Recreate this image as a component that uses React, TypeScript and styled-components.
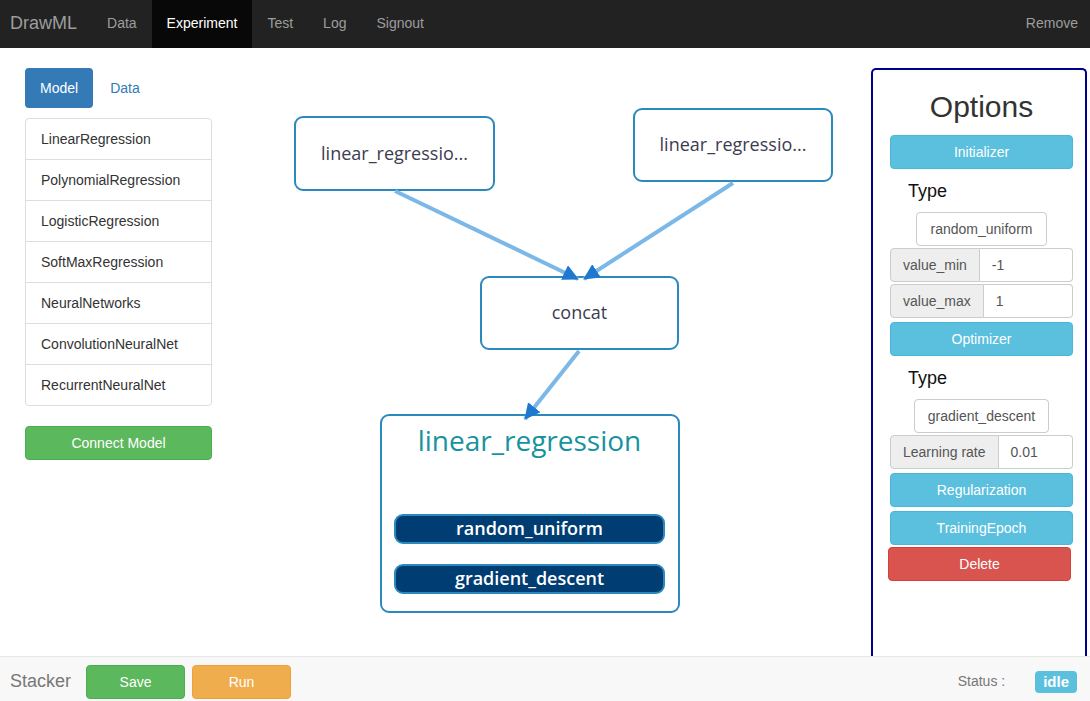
import styled, { createGlobalStyle, css } from "styled-components";

const GlobalStyle = createGlobalStyle`
  html, body {
    margin: 0;
    padding: 0;
    height: 100%;
  }
  body {
    font-family: "Liberation Sans", Arial, sans-serif;
    font-size: 14px;
    line-height: 1.42857;
    color: #333;
    background: #fff;
  }
  * {
    box-sizing: border-box;
  }
`;

const navLinks = ["Data", "Experiment", "Test", "Log", "Signout"];

const models = [
  "LinearRegression",
  "PolynomialRegression",
  "LogisticRegression",
  "SoftMaxRegression",
  "NeuralNetworks",
  "ConvolutionNeuralNet",
  "RecurrentNeuralNet",
];

const Page = styled.div`
  display: flex;
  flex-direction: column;
  height: 100vh;
  overflow: hidden;
`;

const Navbar = styled.nav`
  display: flex;
  align-items: stretch;
  height: 48px;
  flex-shrink: 0;
  background: #222;
`;

const Brand = styled.div`
  padding: 0 15px 0 10px;
  display: flex;
  align-items: center;
  font-size: 18px;
  color: #9d9d9d;
`;

const NavLink = styled.a<{ $active?: boolean; $right?: boolean }>`
  display: flex;
  align-items: center;
  padding: 0 15px;
  color: #9d9d9d;
  text-decoration: none;
  ${({ $active }) =>
    $active &&
    css`
      background: #080808;
      color: #fff;
    `}
  ${({ $right }) =>
    $right &&
    css`
      margin-left: auto;
      padding-right: 12px;
    `}
`;

const Main = styled.div`
  flex: 1;
  display: flex;
  min-height: 0;
`;

const LeftColumn = styled.div`
  width: 212px;
  flex-shrink: 0;
  padding: 20px 0 0 25px;
`;

const Pills = styled.div`
  display: flex;
  gap: 2px;
`;

const Pill = styled.a<{ $active?: boolean }>`
  display: block;
  padding: 10px 15px;
  line-height: 20px;
  border-radius: 4px;
  text-decoration: none;
  color: ${({ $active }) => ($active ? "#fff" : "#337ab7")};
  background: ${({ $active }) => ($active ? "#337ab7" : "transparent")};
`;

const ListGroup = styled.div`
  margin-top: 10px;
  display: flex;
  flex-direction: column;
`;

const ListItem = styled.div`
  padding: 10px 15px;
  line-height: 20px;
  background: #fff;
  border: 1px solid #ddd;
  margin-bottom: -1px;
  color: #333;
  &:first-child {
    border-radius: 4px 4px 0 0;
  }
  &:last-child {
    margin-bottom: 0;
    border-radius: 0 0 4px 4px;
  }
`;

const Button = styled.button<{ $kind: "success" | "warning" | "info" | "danger" | "primary" }>`
  display: block;
  height: 34px;
  padding: 6px 12px;
  font-family: inherit;
  font-size: 14px;
  line-height: 20px;
  border-radius: 4px;
  border: 1px solid transparent;
  color: #fff;
  text-align: center;
  cursor: pointer;
  ${({ $kind }) =>
    ({
      success: css`
        background: #5cb85c;
        border-color: #4cae4c;
      `,
      warning: css`
        background: #f0ad4e;
        border-color: #eea236;
      `,
      info: css`
        background: #5bc0de;
        border-color: #46b8da;
      `,
      danger: css`
        background: #d9534f;
        border-color: #d43f3a;
      `,
      primary: css`
        background: #337ab7;
        border-color: #2e6da4;
      `,
    })[$kind]}
`;

const WideButton = styled(Button)<{ $gap?: number; $shift?: number }>`
  width: 100%;
  margin-top: ${({ $gap }) => $gap ?? 0}px;
  margin-left: ${({ $shift }) => $shift ?? 0}px;
`;

/* ---------- canvas ---------- */

const Canvas = styled.div`
  flex: 1;
  position: relative;
`;

const Edges = styled.svg`
  position: absolute;
  left: 0;
  top: 0;
  width: 100%;
  height: 100%;
  pointer-events: none;
  z-index: 2;
`;

const Node = styled.div<{ $x: number; $y: number; $w: number; $h: number }>`
  position: absolute;
  left: ${({ $x }) => $x}px;
  top: ${({ $y }) => $y}px;
  width: ${({ $w }) => $w}px;
  height: ${({ $h }) => $h}px;
  border: 2px solid #2a8abd;
  border-radius: 9px;
  background: #fff;
  font-family: "Open Sans", "Noto Sans", sans-serif;
  z-index: 1;
`;

const SimpleNode = styled(Node)`
  display: flex;
  align-items: center;
  justify-content: center;
  font-size: 18px;
  color: #3c3c50;
`;

const GroupNode = styled(Node)`
  display: flex;
  flex-direction: column;
  padding: 6px 13px 0 12px;
`;

const GroupTitle = styled.div`
  text-align: center;
  font-size: 28px;
  line-height: 36px;
  color: #17939f;
`;

const Chip = styled.div<{ $first?: boolean }>`
  height: 30px;
  margin-top: ${({ $first }) => ($first ? 56 : 20)}px;
  border: 2px solid #2a8abd;
  border-radius: 9px;
  background: #003d73;
  color: #fff;
  font-size: 18px;
  font-weight: 600;
  display: flex;
  align-items: center;
  justify-content: center;
`;

/* ---------- options panel ---------- */

const OptionsPanel = styled.aside`
  width: 216px;
  flex-shrink: 0;
  margin: 20px 3px 0 0;
  border: 2px solid #00008b;
  border-bottom: none;
  border-radius: 5px 5px 0 0;
  padding: 0 12px 0 17px;
  display: flex;
  flex-direction: column;
`;

const OptionsTitle = styled.h2`
  margin: 20px 0 12px;
  font-size: 30px;
  font-weight: 400;
  line-height: 33px;
  text-align: center;
  color: #333;
`;

const TypeLabel = styled.div`
  margin: 12px 0 11px 18px;
  font-size: 18px;
  line-height: 20px;
  color: #111;
`;

const TypeInput = styled.div<{ $w: number }>`
  align-self: center;
  width: ${({ $w }) => $w}px;
  height: 34px;
  padding: 6px 0;
  line-height: 20px;
  text-align: center;
  color: #555;
  border: 1px solid #ccc;
  border-radius: 4px;
  background: #fff;
`;

const InputGroup = styled.div`
  display: flex;
  height: 34px;
  margin-top: 2px;
`;

const Addon = styled.span`
  padding: 6px 12px;
  line-height: 20px;
  color: #555;
  background: #eee;
  border: 1px solid #ccc;
  border-radius: 4px 0 0 4px;
  white-space: nowrap;
`;

const AddonValue = styled.span`
  flex: 1;
  padding: 6px 12px;
  line-height: 20px;
  color: #555;
  border: 1px solid #ccc;
  border-left: none;
  border-radius: 0 4px 4px 0;
  background: #fff;
`;

/* ---------- footer ---------- */

const Footer = styled.footer`
  height: 45px;
  flex-shrink: 0;
  display: flex;
  align-items: center;
  padding-top: 5px;
  background: #f8f8f8;
  border-top: 1px solid #e7e7e7;
  position: relative;
  z-index: 3;
`;

const FooterBrand = styled.span`
  padding: 0 15px 0 10px;
  font-size: 18px;
  color: #777;
`;

const FooterButton = styled(Button)`
  width: 99px;
  margin-right: 7px;
`;

const Status = styled.span`
  margin-left: auto;
  color: #777;
`;

const StatusLabel = styled.span`
  margin: 0 13px 0 30px;
  padding: 1px 8px;
  height: 22px;
  line-height: 20px;
  font-size: 15px;
  font-weight: 700;
  color: #fff;
  background: #5bc0de;
  border-radius: 4px;
`;

export default function App() {
  return (
    <Page>
      <GlobalStyle />
      <Navbar>
        <Brand>DrawML</Brand>
        {navLinks.map((l) => (
          <NavLink key={l} $active={l === "Experiment"}>
            {l}
          </NavLink>
        ))}
        <NavLink $right>Remove</NavLink>
      </Navbar>

      <Main>
        <LeftColumn>
          <Pills>
            <Pill $active>Model</Pill>
            <Pill>Data</Pill>
          </Pills>
          <ListGroup>
            {models.map((m) => (
              <ListItem key={m}>{m}</ListItem>
            ))}
          </ListGroup>
          <WideButton $kind="success" $gap={20}>
            Connect Model
          </WideButton>
        </LeftColumn>

        <Canvas>
          <Edges>
            <defs>
              <marker
                id="arrow"
                markerUnits="userSpaceOnUse"
                markerWidth="16"
                markerHeight="16"
                viewBox="0 0 16 16"
                refX="15"
                refY="8"
                orient="auto"
              >
                <path d="M0 0 L16 8 L0 16 Z" fill="#1f78cf" />
              </marker>
            </defs>
            <g stroke="#7bb8e8" strokeWidth="4" strokeLinecap="butt">
              <line x1="183" y1="143" x2="366" y2="231" markerEnd="url(#arrow)" />
              <line x1="521" y1="135" x2="372" y2="231" markerEnd="url(#arrow)" />
              <line x1="367" y1="303" x2="313" y2="371" markerEnd="url(#arrow)" />
            </g>
          </Edges>

          <SimpleNode $x={82} $y={68} $w={201} $h={75}>
            linear_regressio...
          </SimpleNode>
          <SimpleNode $x={421} $y={60} $w={200} $h={74}>
            linear_regressio...
          </SimpleNode>
          <SimpleNode $x={268} $y={228} $w={199} $h={74}>
            concat
          </SimpleNode>
          <GroupNode $x={168} $y={366} $w={300} $h={199}>
            <GroupTitle>linear_regression</GroupTitle>
            <Chip $first>random_uniform</Chip>
            <Chip>gradient_descent</Chip>
          </GroupNode>
        </Canvas>

        <OptionsPanel>
          <OptionsTitle>Options</OptionsTitle>
          <WideButton $kind="info">Initializer</WideButton>
          <TypeLabel>Type</TypeLabel>
          <TypeInput $w={131}>random_uniform</TypeInput>
          <InputGroup>
            <Addon>value_min</Addon>
            <AddonValue>-1</AddonValue>
          </InputGroup>
          <InputGroup>
            <Addon>value_max</Addon>
            <AddonValue>1</AddonValue>
          </InputGroup>
          <WideButton $kind="info" $gap={4}>
            Optimizer
          </WideButton>
          <TypeLabel>Type</TypeLabel>
          <TypeInput $w={135}>gradient_descent</TypeInput>
          <InputGroup>
            <Addon>Learning rate</Addon>
            <AddonValue>0.01</AddonValue>
          </InputGroup>
          <WideButton $kind="info" $gap={4}>
            Regularization
          </WideButton>
          <WideButton $kind="info" $gap={4}>
            TrainingEpoch
          </WideButton>
          <WideButton $kind="danger" $gap={2} $shift={-2}>
            Delete
          </WideButton>
        </OptionsPanel>
      </Main>

      <Footer>
        <FooterBrand>Stacker</FooterBrand>
        <FooterButton $kind="success">Save</FooterButton>
        <FooterButton $kind="warning">Run</FooterButton>
        <Status>Status :</Status>
        <StatusLabel>idle</StatusLabel>
      </Footer>
    </Page>
  );
}
